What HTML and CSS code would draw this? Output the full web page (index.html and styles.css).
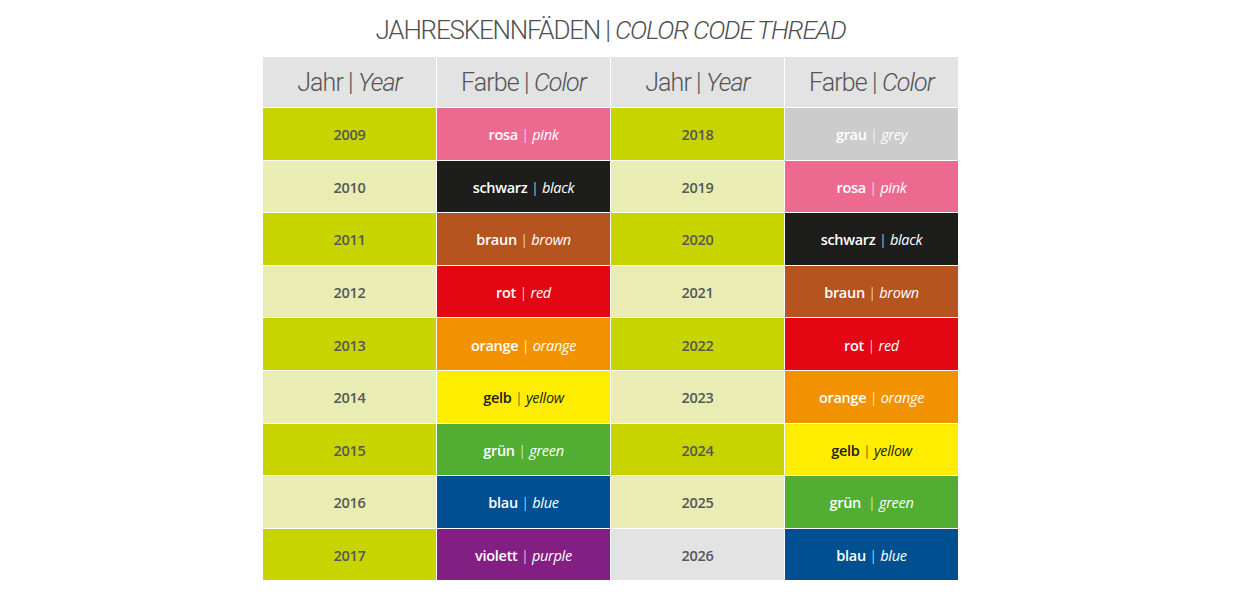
FILE: index.html
```html
<!DOCTYPE html>
<html lang="de">
<head>
<meta charset="utf-8">
<title>Jahreskennfäden</title>
<link rel="stylesheet" href="styles.css">
</head>
<body>
<main class="page">
  <h1 class="title">JAHRESKENNFÄDEN | <em>COLOR CODE THREAD</em></h1>
  <div class="grid">
    <div class="head"><span>Jahr <span class="sep">|</span> <em>Year</em></span></div>
    <div class="head"><span>Farbe <span class="sep">|</span> <em>Color</em></span></div>
    <div class="head"><span>Jahr <span class="sep">|</span> <em>Year</em></span></div>
    <div class="head"><span>Farbe <span class="sep">|</span> <em>Color</em></span></div>

    <div class="cell y-dark">2009</div>
    <div class="cell c-pink"><span><b>rosa</b> <span class="sep">|</span> <em>pink</em></span></div>
    <div class="cell y-dark">2018</div>
    <div class="cell c-grey"><span><b>grau</b> <span class="sep">|</span> <em>grey</em></span></div>

    <div class="cell y-light">2010</div>
    <div class="cell c-black"><span><b>schwarz</b> <span class="sep">|</span> <em>black</em></span></div>
    <div class="cell y-light">2019</div>
    <div class="cell c-pink"><span><b>rosa</b> <span class="sep">|</span> <em>pink</em></span></div>

    <div class="cell y-dark">2011</div>
    <div class="cell c-brown"><span><b>braun</b> <span class="sep">|</span> <em>brown</em></span></div>
    <div class="cell y-dark">2020</div>
    <div class="cell c-black"><span><b>schwarz</b> <span class="sep">|</span> <em>black</em></span></div>

    <div class="cell y-light">2012</div>
    <div class="cell c-red"><span><b>rot</b> <span class="sep">|</span> <em>red</em></span></div>
    <div class="cell y-light">2021</div>
    <div class="cell c-brown"><span><b>braun</b> <span class="sep">|</span> <em>brown</em></span></div>

    <div class="cell y-dark">2013</div>
    <div class="cell c-orange"><span><b>orange</b> <span class="sep">|</span> <em>orange</em></span></div>
    <div class="cell y-dark">2022</div>
    <div class="cell c-red"><span><b>rot</b> <span class="sep">|</span> <em>red</em></span></div>

    <div class="cell y-light">2014</div>
    <div class="cell c-yellow"><span><b>gelb</b> <span class="sep">|</span> <em>yellow</em></span></div>
    <div class="cell y-light">2023</div>
    <div class="cell c-orange"><span><b>orange</b> <span class="sep">|</span> <em>orange</em></span></div>

    <div class="cell y-dark">2015</div>
    <div class="cell c-green"><span><b>grün</b> <span class="sep">|</span> <em>green</em></span></div>
    <div class="cell y-dark">2024</div>
    <div class="cell c-yellow"><span><b>gelb</b> <span class="sep">|</span> <em>yellow</em></span></div>

    <div class="cell y-light">2016</div>
    <div class="cell c-blue"><span><b>blau</b> <span class="sep">|</span> <em>blue</em></span></div>
    <div class="cell y-light">2025</div>
    <div class="cell c-green"><span><b>grün</b>  <span class="sep">|</span> <em>green</em></span></div>

    <div class="cell y-dark">2017</div>
    <div class="cell c-purple"><span><b>violett</b> <span class="sep">|</span> <em>purple</em></span></div>
    <div class="cell y-grey">2026</div>
    <div class="cell c-blue"><span><b>blau</b> <span class="sep">|</span> <em>blue</em></span></div>
  </div>
</main>
</body>
</html>
```

FILE: styles.css
```css
html, body {
  margin: 0;
  padding: 0;
  background: #ffffff;
}

.page {
  width: 695px;
  margin-left: 263px;
  padding-top: 17px;
  font-family: "Roboto", sans-serif;
}

.title {
  margin: 0 0 13px;
  text-align: center;
  font-family: "Roboto", sans-serif;
  font-weight: 300;
  font-size: 26px;
  line-height: 27px;
  color: #4f4f4f;
  letter-spacing: -1.2px;
  white-space: nowrap;
}

.title em {
  font-style: italic;
}

.grid {
  display: grid;
  grid-template-columns: repeat(4, 173px);
  grid-template-rows: 50px repeat(9, 51.6px);
  gap: 1px;
  background: #ffffff;
}

.head {
  display: flex;
  align-items: center;
  justify-content: center;
  background: #e3e3e3;
  color: #555555;
  font-family: "Roboto", sans-serif;
  font-weight: 300;
  font-size: 25px;
  letter-spacing: -0.9px;
  white-space: pre;
}

.head em {
  font-style: italic;
}

.cell {
  display: flex;
  align-items: center;
  justify-content: center;
  padding-top: 2px;
  font-family: "Open Sans", "Lato", sans-serif;
  font-size: 14.5px;
  letter-spacing: -0.3px;
  white-space: pre;
  color: #ffffff;
}

.cell b {
  font-weight: 600;
}

.cell em {
  font-style: italic;
  font-weight: 400;
}

.cell .sep {
  font-weight: 300;
}

.y-dark,
.y-light,
.y-grey {
  color: #575756;
  font-weight: 600;
}

.y-dark { background: #c8d400; }
.y-light { background: #e9edb4; }
.y-grey { background: #e3e3e3; }

.c-pink { background: #ec6a90; }
.c-grey { background: #cccccc; }
.c-black { background: #1d1d1b; }
.c-brown { background: #b5541f; }
.c-red { background: #e30613; }
.c-orange { background: #f39200; }
.c-yellow { background: #ffed00; color: #1d1d1b; }
.c-green { background: #52ae32; }
.c-blue { background: #004f91; }
.c-purple { background: #831f82; }
```
